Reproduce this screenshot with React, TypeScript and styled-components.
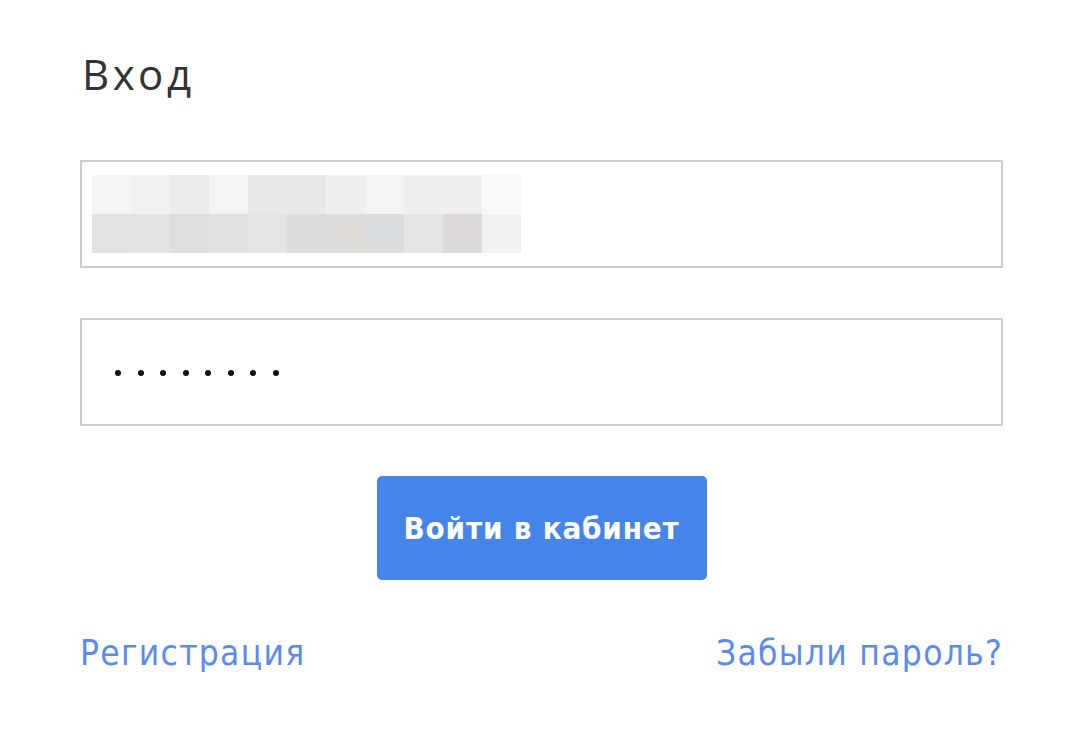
import React from "react";
import styled, { createGlobalStyle } from "styled-components";

const Global = createGlobalStyle`
  html, body { margin: 0; padding: 0; background: #ffffff; }
  body { font-family: "DejaVu Sans", sans-serif; }
`;

const Page = styled.div`
  width: 1082px;
  height: 756px;
  box-sizing: border-box;
  padding: 46px 0 0 80px;
`;

const Form = styled.form`
  width: 923px;
  display: flex;
  flex-direction: column;
`;

const Title = styled.h1`
  margin: 0 0 0 2px;
  font-family: "Open Sans", sans-serif;
  font-weight: 400;
  font-size: 42px;
  line-height: 56px;
  color: #333333;
  letter-spacing: 3.5px;
`;

const Field = styled.div<{ $mt: number }>`
  margin-top: ${(p) => p.$mt}px;
  height: 108px;
  box-sizing: border-box;
  border: 2px solid #cccccc;
  background: #ffffff;
  display: flex;
  align-items: center;
  padding-left: 10px;
`;

const Pixelated = styled.div`
  display: grid;
  grid-template-columns: repeat(11, 39px);
  grid-template-rows: 39px 39px;
`;

const Pixel = styled.div<{ $c: string }>`
  background: ${(p) => p.$c};
`;

const Dots = styled.div`
  display: flex;
  gap: 16.5px;
  padding-left: 23px;
  padding-top: 2px;
`;

const Dot = styled.span`
  width: 6px;
  height: 6px;
  border-radius: 50%;
  background: #111111;
`;

const ButtonRow = styled.div`
  margin-top: 50px;
  display: flex;
  justify-content: center;
`;

const Submit = styled.button`
  width: 330px;
  height: 104px;
  border: none;
  border-radius: 5px;
  background: #4584e8;
  color: #ffffff;
  font-family: "DejaVu Sans Condensed", "DejaVu Sans", sans-serif;
  font-weight: 700;
  font-size: 31px;
  letter-spacing: 0.8px;
  padding: 0;
  cursor: pointer;
`;

const Links = styled.div`
  margin-top: 50px;
  display: flex;
  justify-content: space-between;
  align-items: baseline;
`;

const LinkText = styled.a`
  font-family: "DejaVu Sans Condensed", "DejaVu Sans", sans-serif;
  font-size: 35px;
  line-height: 46px;
  color: #5a8bf0;
  text-decoration: none;
  letter-spacing: 1.3px;
`;

const row1 = ["#f5f5f5", "#f1f1f1", "#ebebea", "#f4f4f3", "#e8e8e8", "#e8e8e8", "#efeff0", "#f4f4f2", "#efefef", "#efefef", "#f9f9f9"];
const row2 = ["#e2e2e2", "#e4e3e2", "#dededd", "#e1e1e1", "#e3e4e4", "#dddddd", "#e0dcda", "#d9dddf", "#e6e6e6", "#ddd9d8", "#f0f1f2"];

export default function App() {
  return (
    <Page>
      <Global />
      <Form onSubmit={(e) => e.preventDefault()}>
        <Title>Вход</Title>
        <Field $mt={58}>
          <Pixelated>
            {row1.map((c, i) => (
              <Pixel key={"a" + i} $c={c} />
            ))}
            {row2.map((c, i) => (
              <Pixel key={"b" + i} $c={c} />
            ))}
          </Pixelated>
        </Field>
        <Field $mt={50}>
          <Dots>
            {Array.from({ length: 8 }).map((_, i) => (
              <Dot key={i} />
            ))}
          </Dots>
        </Field>
        <ButtonRow>
          <Submit type="submit">Войти в кабинет</Submit>
        </ButtonRow>
        <Links>
          <LinkText href="#">Регистрация</LinkText>
          <LinkText href="#">Забыли пароль?</LinkText>
        </Links>
      </Form>
    </Page>
  );
}
